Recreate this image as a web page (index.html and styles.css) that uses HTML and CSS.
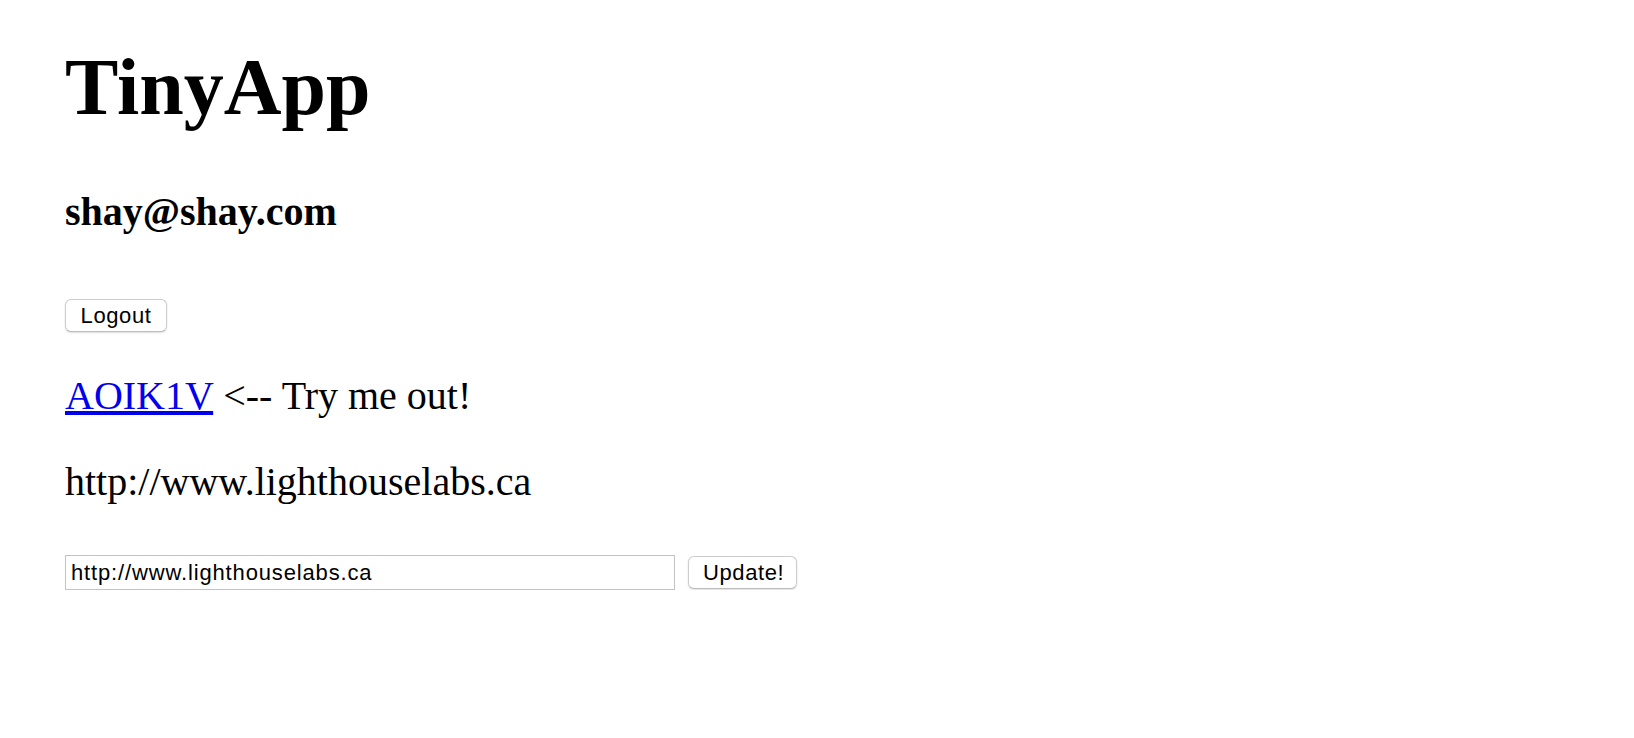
FILE: index.html
```html
<!DOCTYPE html>
<html lang="en">
<head>
<meta charset="utf-8">
<title>TinyApp</title>
<link rel="stylesheet" href="styles.css">
</head>
<body>
<main class="page">
  <h1 class="title">TinyApp</h1>
  <h3 class="user">shay@shay.com</h3>
  <form class="logout">
    <button type="button" class="btn">Logout</button>
  </form>
  <p class="line"><a class="short" href="#">AOIK1V</a> &lt;-- Try me out!</p>
  <p class="line">http://www.lighthouselabs.ca</p>
  <form class="update">
    <input class="url" type="text" value="http://www.lighthouselabs.ca">
    <button type="button" class="btn btn-update">Update!</button>
  </form>
</main>
</body>
</html>
```

FILE: styles.css
```css
html, body {
  margin: 0;
  background: #ffffff;
}

.page {
  padding: 41px 0 0 65px;
  font-family: "Liberation Serif", "Times New Roman", serif;
  color: #000000;
}

.title {
  margin: 0;
  font-size: 80px;
  line-height: 92px;
  font-weight: bold;
}

.user {
  margin: 55px 0 0;
  font-size: 40px;
  line-height: 47px;
  font-weight: bold;
}

.logout {
  margin: 64px 0 0;
  display: flex;
}

.btn {
  box-sizing: border-box;
  height: 33px;
  padding: 0 14px;
  background: #ffffff;
  border: 1px solid #cdcdcd;
  border-bottom-color: #bdbdbd;
  border-radius: 6px;
  box-shadow: 0 1px 2px rgba(0, 0, 0, 0.14);
  font-family: "Liberation Sans", Arial, sans-serif;
  font-size: 22px;
  letter-spacing: 0.6px;
  color: #000000;
  line-height: 1;
}

.logout .btn {
  width: 102px;
}

.btn-update {
  width: 109px;
}

.line {
  margin: 40px 0 0;
  font-size: 40px;
  line-height: 46px;
}

.line:first-of-type {
  margin-top: 41px;
}

.short {
  color: #0000ee;
  text-decoration: underline;
}

.update {
  margin: 50px 0 0;
  display: flex;
  align-items: center;
  gap: 13px;
}

.url {
  box-sizing: border-box;
  width: 610px;
  height: 35px;
  padding: 0 5px;
  margin: 0;
  border: 1px solid #c3c3c3;
  border-radius: 0;
  font-family: "Liberation Sans", Arial, sans-serif;
  font-size: 22px;
  letter-spacing: 0.85px;
  color: #000000;
  outline: none;
}
```
